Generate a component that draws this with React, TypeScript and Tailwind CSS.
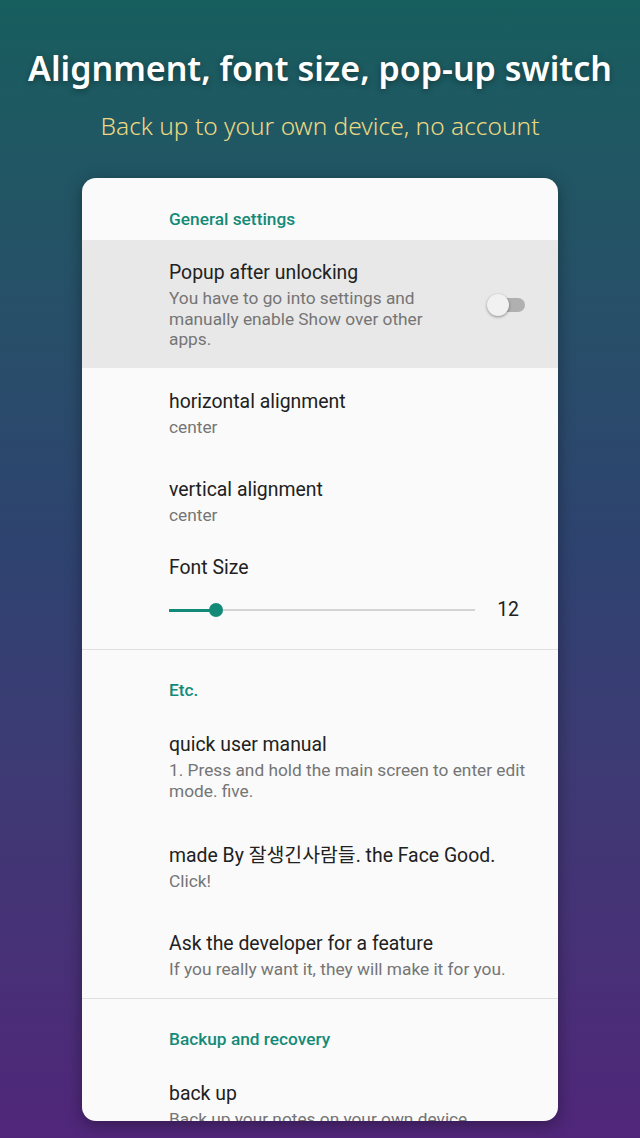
const teal = "text-[#138a78]";

const Category = ({ title, divider }: { title: string; divider?: boolean }) => (
  <div
    className={`flex h-[62px] items-end pb-[11px] pl-[87px] ${divider ? "border-t border-[#e0e0e0]" : ""}`}
  >
    <p className={`text-[17.3px] font-medium leading-[20px] ${teal}`}>{title}</p>
  </div>
);

const Row = ({ title, summary, pb = "pb-[18.5px]" }: { title: string; summary: string; pb?: string }) => (
  <div className={`pl-[87px] pr-[30px] pt-[22px] ${pb}`}>
    <p className="text-[19.4px] leading-[24px] text-[#212121]">{title}</p>
    <p className="mt-[3px] text-[17.3px] leading-[20.5px] text-[#757575]">{summary}</p>
  </div>
);

export default function App() {
  return (
    <div className="flex h-[1138px] w-full flex-col items-center overflow-hidden bg-gradient-to-b from-[#175e5e] via-[#2f4270] to-[#50267a] font-['Roboto','Noto_Sans_CJK_KR',sans-serif]">
      <h1 className="mt-[46px] whitespace-nowrap font-['Noto_Sans',sans-serif] text-[34px] font-semibold leading-[44px] text-white [text-shadow:0_2px_6px_rgba(0,0,0,0.35)]">
        Alignment, font size, pop-up switch
      </h1>
      <p className="mt-[20px] font-['Noto_Sans',sans-serif] text-[24.5px] font-light leading-[32px] text-[#ecd883]">
        Back up to your own device, no account
      </p>

      <div className="mt-[36px] h-[943px] w-[476px] shrink-0 overflow-hidden rounded-[14px] bg-[#fafafa] shadow-[0_4px_16px_rgba(0,0,0,0.35)]">
        <Category title="General settings" />

        <div className="flex items-center bg-[#e8e8e8] pb-[18.5px] pl-[87px] pr-[33px] pt-[21px]">
          <div className="min-w-0 flex-1 pr-[46px]">
            <p className="text-[19.4px] leading-[24px] text-[#212121]">Popup after unlocking</p>
            <p className="mt-[3px] text-[17.3px] leading-[20.5px] text-[#757575]">
              You have to go into settings and manually enable Show over other apps.
            </p>
          </div>
          <div className="relative h-[14px] w-[36px] shrink-0 rounded-full bg-[#b0b0b0]">
            <span className="absolute -left-[2px] -top-[4px] h-[22px] w-[22px] rounded-full bg-[#f1f1f1] shadow-[0_1px_3px_rgba(0,0,0,0.4)]" />
          </div>
        </div>

        <Row title="horizontal alignment" summary="center" />
        <Row title="vertical alignment" summary="center" />

        <div className="pb-[23px] pl-[87px] pr-[39px] pt-[12px]">
          <p className="text-[19.4px] leading-[24px] text-[#212121]">Font Size</p>
          <div className="mt-[14px] flex h-[32px] items-center">
            <div className="relative flex h-[2px] w-[306px] items-center bg-[#d3d3d3]">
              <div className="h-[3px] w-[47px] bg-[#138a78]" />
              <span className="absolute left-[40px] h-[14px] w-[14px] rounded-full bg-[#138a78]" />
            </div>
            <span className="ml-auto text-[19.4px] leading-[24px] text-[#212121]">12</span>
          </div>
        </div>

        <Category title="Etc." divider />
        <Row
          title="quick user manual"
          summary="1. Press and hold the main screen to enter edit mode. five."
          pb="pb-[21px]"
        />
        <Row title="made By 잘생긴사람들. the Face Good." summary="Click!" />
        <Row title="Ask the developer for a feature" summary="If you really want it, they will make it for you." />

        <Category title="Backup and recovery" divider />
        <Row title="back up" summary="Back up your notes on your own device." />
      </div>
    </div>
  );
}
